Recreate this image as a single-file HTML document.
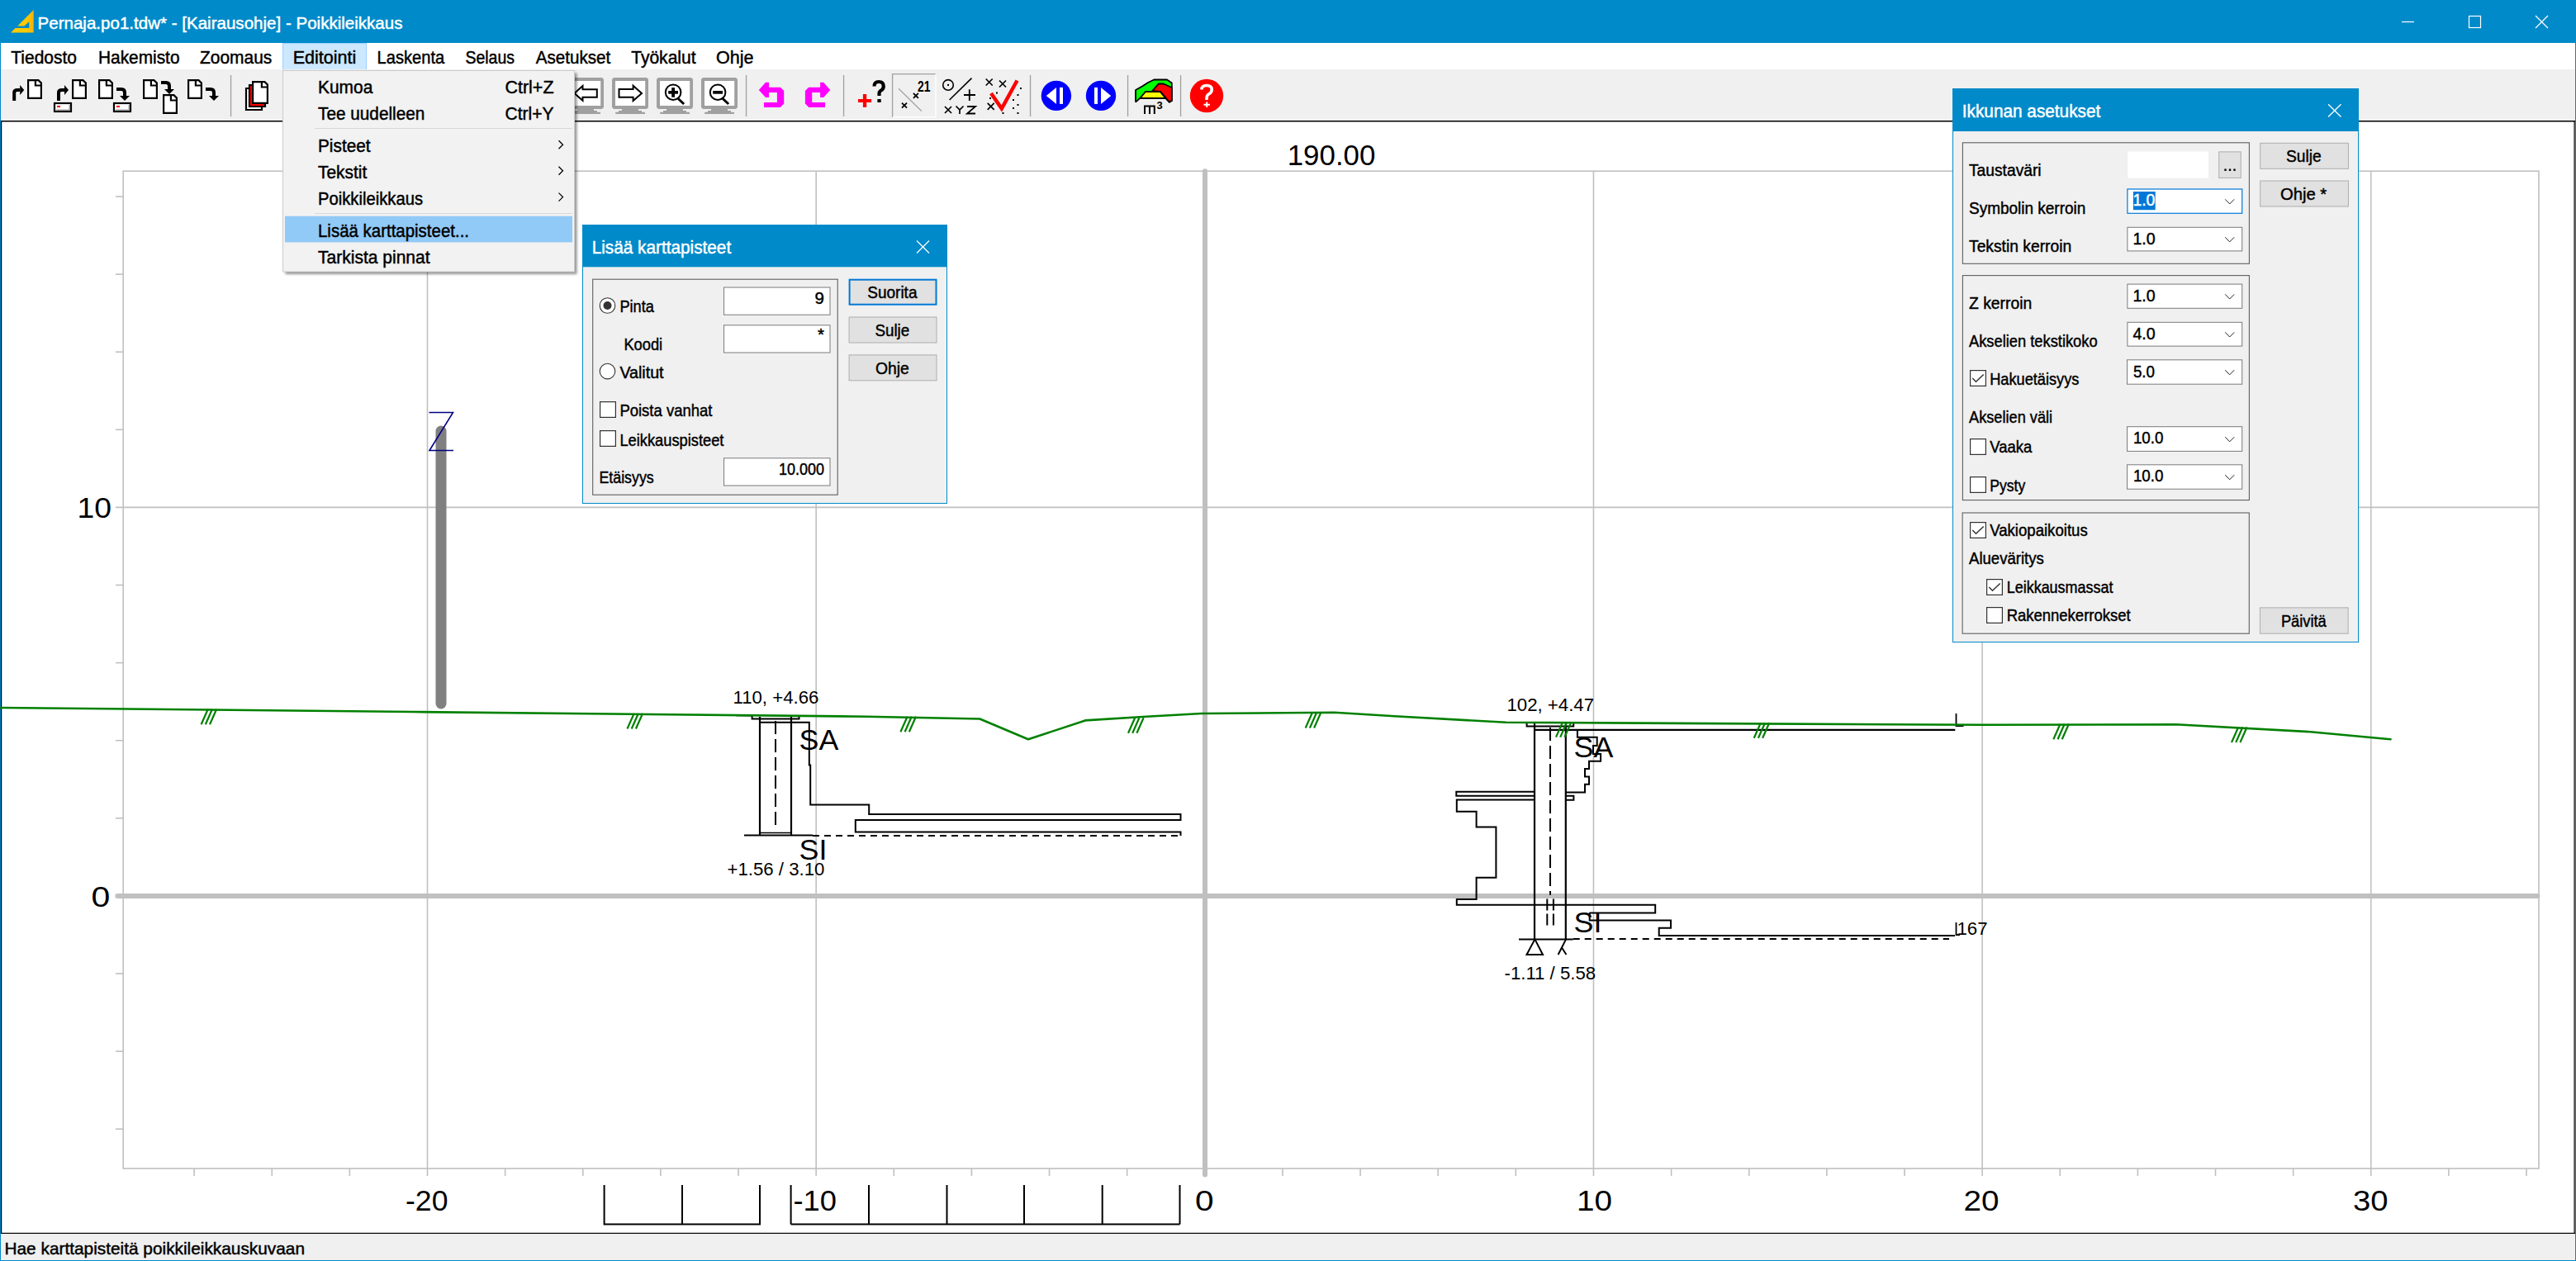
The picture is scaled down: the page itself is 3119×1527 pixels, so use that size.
<!DOCTYPE html>
<html><head><meta charset="utf-8"><style>
html,body{margin:0;padding:0;overflow:hidden;background:#fff;width:3119px;height:1527px}
svg{display:block;font-family:"Liberation Sans",sans-serif}
</style></head><body>
<svg width="3119" height="1527" viewBox="0 0 3119 1527">
<rect x="0" y="0" width="3119" height="1527" fill="#fff" />
<rect x="149.2" y="207.2" width="2924.8" height="1207.8" fill="none" stroke="#c0c0c0" stroke-width="1.6" />
<line x1="235.1099999999999" y1="1415" x2="235.1099999999999" y2="1424" stroke="#c0c0c0" stroke-width="1.6" />
<line x1="329.24" y1="1415" x2="329.24" y2="1424" stroke="#c0c0c0" stroke-width="1.6" />
<line x1="423.3700000000001" y1="1415" x2="423.3700000000001" y2="1424" stroke="#c0c0c0" stroke-width="1.6" />
<line x1="611.63" y1="1415" x2="611.63" y2="1424" stroke="#c0c0c0" stroke-width="1.6" />
<line x1="705.76" y1="1415" x2="705.76" y2="1424" stroke="#c0c0c0" stroke-width="1.6" />
<line x1="799.89" y1="1415" x2="799.89" y2="1424" stroke="#c0c0c0" stroke-width="1.6" />
<line x1="894.02" y1="1415" x2="894.02" y2="1424" stroke="#c0c0c0" stroke-width="1.6" />
<line x1="1082.28" y1="1415" x2="1082.28" y2="1424" stroke="#c0c0c0" stroke-width="1.6" />
<line x1="1176.4099999999999" y1="1415" x2="1176.4099999999999" y2="1424" stroke="#c0c0c0" stroke-width="1.6" />
<line x1="1270.54" y1="1415" x2="1270.54" y2="1424" stroke="#c0c0c0" stroke-width="1.6" />
<line x1="1364.67" y1="1415" x2="1364.67" y2="1424" stroke="#c0c0c0" stroke-width="1.6" />
<line x1="1552.9299999999998" y1="1415" x2="1552.9299999999998" y2="1424" stroke="#c0c0c0" stroke-width="1.6" />
<line x1="1647.06" y1="1415" x2="1647.06" y2="1424" stroke="#c0c0c0" stroke-width="1.6" />
<line x1="1741.19" y1="1415" x2="1741.19" y2="1424" stroke="#c0c0c0" stroke-width="1.6" />
<line x1="1835.32" y1="1415" x2="1835.32" y2="1424" stroke="#c0c0c0" stroke-width="1.6" />
<line x1="2023.58" y1="1415" x2="2023.58" y2="1424" stroke="#c0c0c0" stroke-width="1.6" />
<line x1="2117.71" y1="1415" x2="2117.71" y2="1424" stroke="#c0c0c0" stroke-width="1.6" />
<line x1="2211.84" y1="1415" x2="2211.84" y2="1424" stroke="#c0c0c0" stroke-width="1.6" />
<line x1="2305.97" y1="1415" x2="2305.97" y2="1424" stroke="#c0c0c0" stroke-width="1.6" />
<line x1="2494.2299999999996" y1="1415" x2="2494.2299999999996" y2="1424" stroke="#c0c0c0" stroke-width="1.6" />
<line x1="2588.3599999999997" y1="1415" x2="2588.3599999999997" y2="1424" stroke="#c0c0c0" stroke-width="1.6" />
<line x1="2682.49" y1="1415" x2="2682.49" y2="1424" stroke="#c0c0c0" stroke-width="1.6" />
<line x1="2776.62" y1="1415" x2="2776.62" y2="1424" stroke="#c0c0c0" stroke-width="1.6" />
<line x1="2964.88" y1="1415" x2="2964.88" y2="1424" stroke="#c0c0c0" stroke-width="1.6" />
<line x1="3059.01" y1="1415" x2="3059.01" y2="1424" stroke="#c0c0c0" stroke-width="1.6" />
<line x1="140" y1="1367.2" x2="149" y2="1367.2" stroke="#c0c0c0" stroke-width="1.6" />
<line x1="140" y1="1273.1000000000001" x2="149" y2="1273.1000000000001" stroke="#c0c0c0" stroke-width="1.6" />
<line x1="140" y1="1179.0" x2="149" y2="1179.0" stroke="#c0c0c0" stroke-width="1.6" />
<line x1="140" y1="990.8000000000001" x2="149" y2="990.8000000000001" stroke="#c0c0c0" stroke-width="1.6" />
<line x1="140" y1="896.7" x2="149" y2="896.7" stroke="#c0c0c0" stroke-width="1.6" />
<line x1="140" y1="802.6000000000001" x2="149" y2="802.6000000000001" stroke="#c0c0c0" stroke-width="1.6" />
<line x1="140" y1="708.5000000000001" x2="149" y2="708.5000000000001" stroke="#c0c0c0" stroke-width="1.6" />
<line x1="140" y1="520.3000000000002" x2="149" y2="520.3000000000002" stroke="#c0c0c0" stroke-width="1.6" />
<line x1="140" y1="426.20000000000016" x2="149" y2="426.20000000000016" stroke="#c0c0c0" stroke-width="1.6" />
<line x1="140" y1="332.10000000000014" x2="149" y2="332.10000000000014" stroke="#c0c0c0" stroke-width="1.6" />
<line x1="140" y1="238.0000000000001" x2="149" y2="238.0000000000001" stroke="#c0c0c0" stroke-width="1.6" />
<line x1="517.5" y1="207" x2="517.5" y2="1424" stroke="#c0c0c0" stroke-width="1.6" />
<line x1="988.15" y1="207" x2="988.15" y2="1424" stroke="#c0c0c0" stroke-width="1.6" />
<line x1="1929.4499999999998" y1="207" x2="1929.4499999999998" y2="1424" stroke="#c0c0c0" stroke-width="1.6" />
<line x1="2400.1" y1="207" x2="2400.1" y2="1424" stroke="#c0c0c0" stroke-width="1.6" />
<line x1="2870.75" y1="207" x2="2870.75" y2="1424" stroke="#c0c0c0" stroke-width="1.6" />
<line x1="140" y1="614.4000000000001" x2="3074" y2="614.4000000000001" stroke="#c0c0c0" stroke-width="1.6" />
<line x1="1459" y1="207.3" x2="1459" y2="1422.5" stroke="#c0c0c0" stroke-width="6" stroke-linecap="round"/>
<line x1="142.3" y1="1085" x2="3072.5" y2="1085" stroke="#c0c0c0" stroke-width="6" stroke-linecap="round"/>
<text x="93.5" y="627" font-size="35.7" textLength="41.5" lengthAdjust="spacingAndGlyphs">10</text>
<text x="110.5" y="1098" font-size="35.7" textLength="22.8" lengthAdjust="spacingAndGlyphs">0</text>
<text x="491" y="1466" font-size="35.7" textLength="51.5" lengthAdjust="spacingAndGlyphs">-20</text>
<text x="960.5" y="1466" font-size="35.7" textLength="52.5" lengthAdjust="spacingAndGlyphs">-10</text>
<text x="1447" y="1466" font-size="35.7" textLength="22.6" lengthAdjust="spacingAndGlyphs">0</text>
<text x="1909" y="1466" font-size="35.7" textLength="43" lengthAdjust="spacingAndGlyphs">10</text>
<text x="2377.5" y="1466" font-size="35.7" textLength="43" lengthAdjust="spacingAndGlyphs">20</text>
<text x="2849" y="1466" font-size="35.7" textLength="42.5" lengthAdjust="spacingAndGlyphs">30</text>
<text x="1558.7" y="200.3" font-size="35.7" textLength="106.7" lengthAdjust="spacingAndGlyphs">190.00</text>
<path d="M731.6,1435 V1482.5 H920 V1435 M826,1435 V1482.5" stroke="#000" stroke-width="2" fill="none" />
<path d="M957.6,1482.5 H1428.5 M957.6,1435 V1482.5 M1052,1435 V1482.5 M1146.5,1435 V1482.5 M1240,1435 V1482.5 M1334.7,1435 V1482.5 M1428.5,1435 V1482.5" stroke="#000" stroke-width="2" fill="none" />
<rect x="0" y="0" width="3119" height="52" fill="#008ac9" />
<defs><linearGradient id="yg" x1="0" y1="0" x2="1" y2="0"><stop offset="0" stop-color="#ffcc00"/><stop offset="0.7" stop-color="#ffc800"/><stop offset="1" stop-color="#f7b10a"/></linearGradient></defs>
<path d="M13.1,39.6 L18.5,34 H35.3 V26.3 L29.3,31.5 H21.3 L40.7,12 V39.6 Z" fill="url(#yg)"/>
<text x="45.5" y="34.9" font-size="20.3" fill="#fff" textLength="442" lengthAdjust="spacingAndGlyphs" stroke="#fff" stroke-width="0.45">Pernaja.po1.tdw* - [Kairausohje] - Poikkileikkaus</text>
<line x1="2908" y1="26.5" x2="2923" y2="26.5" stroke="#fff" stroke-width="1.2" />
<rect x="2989.5" y="19.5" width="14" height="14" fill="none" stroke="#fff" stroke-width="1.2" />
<line x1="3070" y1="19" x2="3085" y2="34" stroke="#fff" stroke-width="1.2" />
<line x1="3085" y1="19" x2="3070" y2="34" stroke="#fff" stroke-width="1.2" />
<rect x="1" y="52" width="3117" height="32" fill="#fff" />
<rect x="342.5" y="52.5" width="101" height="32" fill="#cce8ff" stroke="#99d1ff" stroke-width="1" />
<text x="13.3" y="77.2" font-size="21.2" textLength="79.7" lengthAdjust="spacingAndGlyphs" stroke="#000" stroke-width="0.45">Tiedosto</text>
<text x="119" y="77.2" font-size="21.2" textLength="98.5" lengthAdjust="spacingAndGlyphs" stroke="#000" stroke-width="0.45">Hakemisto</text>
<text x="242" y="77.2" font-size="21.2" textLength="87.3" lengthAdjust="spacingAndGlyphs" stroke="#000" stroke-width="0.45">Zoomaus</text>
<text x="354.7" y="77.2" font-size="21.2" textLength="76.7" lengthAdjust="spacingAndGlyphs" stroke="#000" stroke-width="0.45">Editointi</text>
<text x="456.6" y="77.2" font-size="21.2" textLength="81.6" lengthAdjust="spacingAndGlyphs" stroke="#000" stroke-width="0.45">Laskenta</text>
<text x="563.4" y="77.2" font-size="21.2" textLength="59.6" lengthAdjust="spacingAndGlyphs" stroke="#000" stroke-width="0.45">Selaus</text>
<text x="648.7" y="77.2" font-size="21.2" textLength="90.6" lengthAdjust="spacingAndGlyphs" stroke="#000" stroke-width="0.45">Asetukset</text>
<text x="764.2" y="77.2" font-size="21.2" textLength="78.4" lengthAdjust="spacingAndGlyphs" stroke="#000" stroke-width="0.45">Työkalut</text>
<text x="867" y="77.2" font-size="21.2" textLength="45.4" lengthAdjust="spacingAndGlyphs" stroke="#000" stroke-width="0.45">Ohje</text>
<rect x="1" y="84" width="3117" height="62" fill="#f0f0f0" />
<rect x="0" y="146" width="3119" height="1.5" fill="#000" />
<rect x="1" y="146" width="1.2" height="1348" fill="#000" />
<rect x="3116.5" y="146" width="1.2" height="1348" fill="#000" />
<rect x="0" y="1492.8" width="3119" height="1.4" fill="#000" />
<rect x="1" y="1494.2" width="3117" height="32" fill="#f0f0f0" />
<text x="5.5" y="1518.8" font-size="21" textLength="363.5" lengthAdjust="spacingAndGlyphs" stroke="#000" stroke-width="0.45">Hae karttapisteitä poikkileikkauskuvaan</text>
<rect x="0" y="0" width="1" height="1527" fill="#008ac9" />
<rect x="3118" y="0" width="1" height="1527" fill="#008ac9" />
<rect x="0" y="1526" width="3119" height="1" fill="#008ac9" />
<line x1="534" y1="522" x2="534" y2="852" stroke="#808080" stroke-width="13" stroke-linecap="round"/>
<polyline points="519.5,499.5 548.5,499.5 520,545.5 549,545.5" fill="none" stroke="#000080" stroke-width="1.6" />
<line x1="891" y1="866.2" x2="910" y2="866.6" stroke="#000" stroke-width="2" />
<path d="M910.6,866.5 V870.6 H967.5 V866.8" stroke="#000" stroke-width="2" fill="none" />
<path d="M920,874.7 H979.8 V926.6 H981.2 V974.6 H1052.2 V986 H1429.5 V993.1 H1035.8 V1007.4 H1429.5 V1012.1" stroke="#000" stroke-width="2" fill="none" />
<line x1="920" y1="868" x2="920" y2="1011.5" stroke="#000" stroke-width="2.2" />
<line x1="958" y1="868" x2="958" y2="1011.5" stroke="#000" stroke-width="2.2" />
<path d="M920,1008.5 H958" stroke="#000" stroke-width="1.5" fill="none" />
<line x1="939" y1="873" x2="939" y2="1000.5" stroke="#000" stroke-width="2" stroke-dasharray="16,6"/>
<line x1="901" y1="1011.5" x2="984" y2="1011.5" stroke="#000" stroke-width="2" />
<line x1="984" y1="1012" x2="1429" y2="1012" stroke="#000" stroke-width="2" stroke-dasharray="8,6"/>
<text x="887.5" y="852" font-size="22.2">110, +4.66</text>
<text x="967.5" y="907.8" font-size="35.8">SA</text>
<text x="967.5" y="1040.6" font-size="35.8">SI</text>
<text x="880.5" y="1060.3" font-size="22.2">+1.56 / 3.10</text>
<path d="M1848.6,875 V879.4 H1905.2 V875" stroke="#000" stroke-width="2" fill="none" />
<line x1="1858" y1="875" x2="1858" y2="1137.4" stroke="#000" stroke-width="2.2" />
<line x1="1895.8" y1="875" x2="1895.8" y2="1137.4" stroke="#000" stroke-width="2.2" />
<line x1="1877" y1="881" x2="1877" y2="1083.7" stroke="#000" stroke-width="2" stroke-dasharray="16,6"/>
<line x1="1873.3" y1="1088.5" x2="1873.3" y2="1122.8" stroke="#000" stroke-width="2" stroke-dasharray="14,4"/>
<line x1="1880.9" y1="1088.5" x2="1880.9" y2="1122.8" stroke="#000" stroke-width="2" stroke-dasharray="14,4"/>
<line x1="1858" y1="883.9" x2="2367.3" y2="883.9" stroke="#000" stroke-width="2.2" />
<path d="M1909.9,884 V892.7 H1933.7 V903 H1929 V912.9 H1938.1 V921.7 H1924 V931 H1919 V940.5 H1924 V949.7 H1919 V959.4 H1895.8" stroke="#000" stroke-width="2" fill="none" />
<path d="M1858,958.8 H1763.3 V963.8 H1858" stroke="#000" stroke-width="2" fill="none" />
<path d="M1858,968.6 H1763.8 V982.8 H1787.6 V1001.5 H1811.4 V1062.8 H1787.6 V1088.9 H1763.8 V1095.7 H2004.2 V1105.6 H1924.7" stroke="#000" stroke-width="2" fill="none" />
<path d="M1895.8,963.8 H1905.4 V968.8 H1895.8" stroke="#000" stroke-width="2" fill="none" />
<path d="M1924.7,1105 V1114.5 H2023 V1123.7 H2008.7 V1133 H2367" stroke="#000" stroke-width="2" fill="none" />
<line x1="1839" y1="1137.4" x2="1904.7" y2="1137.4" stroke="#000" stroke-width="2" />
<line x1="1904.7" y1="1137" x2="2360" y2="1137" stroke="#000" stroke-width="2" stroke-dasharray="8,6"/>
<path d="M1858.4,1137.4 L1848.5,1156 H1868 Z" stroke="#000" stroke-width="2" fill="none" />
<path d="M1896.1,1137.4 L1886.6,1156 M1891.3,1148 L1896.5,1156" stroke="#000" stroke-width="2" fill="none" />
<text x="1824.5" y="861.3" font-size="22.2">102, +4.47</text>
<text x="1905.5" y="916.8" font-size="35.8">SA</text>
<text x="1905.5" y="1128.5" font-size="35.8">SI</text>
<text x="1821.5" y="1185.6" font-size="22.2">-1.11 / 5.58</text>
<path d="M2368.5,864 V879 H2377.5" stroke="#000" stroke-width="1.8" fill="none" />
<path d="M2368.5,1117 V1132 H2373" stroke="#000" stroke-width="1.8" fill="none" />
<text x="2369.5" y="1131.8" font-size="22.2">167</text>
<polyline points="1,857 500,862 1049,867.7 1186.3,870.5 1245,895.3 1314,872.4 1383.8,868 1455,864 1615.6,862.7 1688.3,867.3 1823.5,874.8 2400,877.8 2634.4,877.2 2797.7,886.2 2894.5,895.2" fill="none" stroke="#008000" stroke-width="2.6" stroke-linejoin="round" stroke-linecap="round"/>
<path d="M243.6,877.3 L251.8,858.8 M248.8,877.3 L257.0,858.8 M254.0,877.3 L262.2,858.8 " stroke="#008000" stroke-width="2.2" fill="none" />
<path d="M759.5,882.5 L767.7,864.0 M764.7,882.5 L772.9,864.0 M769.9,882.5 L778.1,864.0 " stroke="#008000" stroke-width="2.2" fill="none" />
<path d="M1090.4,886.3 L1098.6,867.8 M1095.6,886.3 L1103.8,867.8 M1100.8,886.3 L1109.0,867.8 " stroke="#008000" stroke-width="2.2" fill="none" />
<path d="M1366.0,887.8 L1374.2,869.3 M1371.2,887.8 L1379.4,869.3 M1376.4,887.8 L1384.6,869.3 " stroke="#008000" stroke-width="2.2" fill="none" />
<path d="M1580.7,881.5 L1588.9,863.0 M1585.9,881.5 L1594.1,863.0 M1591.1,881.5 L1599.3,863.0 " stroke="#008000" stroke-width="2.2" fill="none" />
<path d="M1884.0,892.6 L1892.2,874.1 M1889.2,892.6 L1897.4,874.1 M1894.4,892.6 L1902.6,874.1 " stroke="#008000" stroke-width="2.2" fill="none" />
<path d="M2123.7,893.8 L2131.9,875.3 M2128.9,893.8 L2137.1,875.3 M2134.1,893.8 L2142.3,875.3 " stroke="#008000" stroke-width="2.2" fill="none" />
<path d="M2486.3,895.2 L2494.5,876.7 M2491.5,895.2 L2499.7,876.7 M2496.7,895.2 L2504.9,876.7 " stroke="#008000" stroke-width="2.2" fill="none" />
<path d="M2702.0,899 L2710.2,880.5 M2707.2,899 L2715.4,880.5 M2712.4,899 L2720.6,880.5 " stroke="#008000" stroke-width="2.2" fill="none" />
<path d="M17.2,122 V112 Q17.2,109 21.2,109 H24.2" fill="none" stroke="#000" stroke-width="4"/>
<path d="M24.2,103 L29.2,109 L24.2,115 Z" fill="#000"/>
<path d="M34.1,97.1 H46.5 L49.9,100.5 V118.9 H34.1 Z" fill="#fff" stroke="#000" stroke-width="2.2" stroke-linejoin="miter"/>
<path d="M42.9,97.1 V103.5 H49.9" fill="none" stroke="#000" stroke-width="2.2"/>
<path d="M71,122 V112 Q71,109 75,109 H78" fill="none" stroke="#000" stroke-width="4"/>
<path d="M78,103 L83,109 L78,115 Z" fill="#000"/>
<path d="M88.1,97.1 H100.5 L103.9,100.5 V118.9 H88.1 Z" fill="#fff" stroke="#000" stroke-width="2.2" stroke-linejoin="miter"/>
<path d="M96.9,97.1 V103.5 H103.9" fill="none" stroke="#000" stroke-width="2.2"/>
<rect x="66" y="125" width="20" height="10" fill="#fff" stroke="#000" stroke-width="2.2"/>
<rect x="68" y="132.5" width="17" height="1.6" fill="#a0a0a0"/>
<rect x="83.5" y="127" width="1.6" height="7" fill="#a0a0a0"/>
<rect x="69" y="128" width="4" height="2" fill="#f00"/>
<path d="M120.1,97.1 H132.5 L135.9,100.5 V118.9 H120.1 Z" fill="#fff" stroke="#000" stroke-width="2.2" stroke-linejoin="miter"/>
<path d="M128.9,97.1 V103.5 H135.9" fill="none" stroke="#000" stroke-width="2.2"/>
<path d="M141,108 H147 Q151,108 151,112 V116" fill="none" stroke="#000" stroke-width="4"/>
<path d="M145,116 H157 L151,122 Z" fill="#000"/>
<rect x="138" y="125" width="20" height="10" fill="#fff" stroke="#000" stroke-width="2.2"/>
<rect x="140" y="132.5" width="17" height="1.6" fill="#a0a0a0"/>
<rect x="155.5" y="127" width="1.6" height="7" fill="#a0a0a0"/>
<rect x="141" y="128" width="4" height="2" fill="#f00"/>
<path d="M174.1,97.1 H186.5 L189.9,100.5 V118.9 H174.1 Z" fill="#fff" stroke="#000" stroke-width="2.2" stroke-linejoin="miter"/>
<path d="M182.9,97.1 V103.5 H189.9" fill="none" stroke="#000" stroke-width="2.2"/>
<path d="M195,100 H201 Q205,100 205,104 V108" fill="none" stroke="#000" stroke-width="4"/>
<path d="M199,108 H211 L205,114 Z" fill="#000"/>
<path d="M198.1,115.1 H210.5 L213.9,118.5 V136.9 H198.1 Z" fill="#fff" stroke="#000" stroke-width="2.2" stroke-linejoin="miter"/>
<path d="M206.9,115.1 V121.5 H213.9" fill="none" stroke="#000" stroke-width="2.2"/>
<path d="M228.1,97.1 H240.5 L243.9,100.5 V118.9 H228.1 Z" fill="#fff" stroke="#000" stroke-width="2.2" stroke-linejoin="miter"/>
<path d="M236.9,97.1 V103.5 H243.9" fill="none" stroke="#000" stroke-width="2.2"/>
<path d="M249,108 H255 Q259,108 259,112 V116" fill="none" stroke="#000" stroke-width="4"/>
<path d="M253,116 H265 L259,122 Z" fill="#000"/>
<rect x="278.9" y="91" width="1.3" height="50" fill="#a0a0a0"/>
<rect x="902.9" y="91" width="1.3" height="50" fill="#a0a0a0"/>
<rect x="1020.9" y="91" width="1.3" height="50" fill="#a0a0a0"/>
<rect x="1246.9" y="91" width="1.3" height="50" fill="#a0a0a0"/>
<rect x="1364.9" y="91" width="1.3" height="50" fill="#a0a0a0"/>
<rect x="1428.9" y="91" width="1.3" height="50" fill="#a0a0a0"/>
<path d="M298,107 H317 V133 H298 Z" fill="#fff" stroke="#000" stroke-width="2.2"/>
<path d="M302,103 H321 V129 H302 Z" fill="#f00" stroke="#000" stroke-width="2.2"/>
<rect x="303.6" y="104.6" width="15.6" height="21.5" fill="#f00"/>
<path d="M306.1,99.1 H320.5 L323.9,102.5 V124.9 H306.1 Z" fill="#fff" stroke="#000" stroke-width="2.2" stroke-linejoin="miter"/>
<path d="M316.9,99.1 V105.5 H323.9" fill="none" stroke="#000" stroke-width="2.2"/>
<path d="M689,94 H729 L731,96 V130 L729,132 H689 L687,130 V96 Z" fill="#a0a0a0"/>
<rect x="691" y="98" width="36.2" height="30" fill="#fff"/>
<rect x="699" y="131.5" width="20" height="3" fill="#a0a0a0"/>
<rect x="695" y="134" width="28" height="2" fill="#a0a0a0"/>
<rect x="691.2" y="135.8" width="35.8" height="2.2" fill="#a0a0a0"/>
<path d="M743,94 H783 L785,96 V130 L783,132 H743 L741,130 V96 Z" fill="#a0a0a0"/>
<rect x="745" y="98" width="36.2" height="30" fill="#fff"/>
<rect x="753" y="131.5" width="20" height="3" fill="#a0a0a0"/>
<rect x="749" y="134" width="28" height="2" fill="#a0a0a0"/>
<rect x="745.2" y="135.8" width="35.8" height="2.2" fill="#a0a0a0"/>
<path d="M797,94 H837 L839,96 V130 L837,132 H797 L795,130 V96 Z" fill="#a0a0a0"/>
<rect x="799" y="98" width="36.2" height="30" fill="#fff"/>
<rect x="807" y="131.5" width="20" height="3" fill="#a0a0a0"/>
<rect x="803" y="134" width="28" height="2" fill="#a0a0a0"/>
<rect x="799.2" y="135.8" width="35.8" height="2.2" fill="#a0a0a0"/>
<path d="M851,94 H891 L893,96 V130 L891,132 H851 L849,130 V96 Z" fill="#a0a0a0"/>
<rect x="853" y="98" width="36.2" height="30" fill="#fff"/>
<rect x="861" y="131.5" width="20" height="3" fill="#a0a0a0"/>
<rect x="857" y="134" width="28" height="2" fill="#a0a0a0"/>
<rect x="853.2" y="135.8" width="35.8" height="2.2" fill="#a0a0a0"/>
<path d="M705.5,108.2 H722.8 V117.7 H705.5 V121.8 L695.5,112.9 L705.5,104 Z" fill="#fff" stroke="#000" stroke-width="2"/>
<path d="M749.5,108 H766.6 V103.8 L777,112.9 L766.6,122 V117.7 H749.5 Z" fill="#fff" stroke="#000" stroke-width="2"/>
<circle cx="815.1" cy="111.7" r="9.3" fill="#fff" stroke="#000" stroke-width="2"/>
<rect x="809.2" y="110" width="11.8" height="3.7" fill="#000"/>
<rect x="813.2" y="106.1" width="3.8" height="11.6" fill="#000"/>
<path d="M820.1,118.5 L828.1,126" stroke="#000" stroke-width="3"/>
<circle cx="869.1" cy="111.7" r="9.3" fill="#fff" stroke="#000" stroke-width="2"/>
<rect x="863.2" y="110" width="11.8" height="3.7" fill="#000"/>
<path d="M874.1,118.5 L882.1,126" stroke="#000" stroke-width="3"/>
<path d="M918.8,109 L927,99.8 H931 V105.8 H944.9 L949.2,110 V125.5 L944.9,129.9 H925 V124 H940.9 V112 H931 V118 H927 Z" fill="#ff00ff"/>
<path d="M1005.3,109 L997.1,99.8 H993.1 V105.8 H979.2 L974.9,110 V125.5 L979.2,129.9 H999 V124 H983.2 V112 H993.1 V118 H997.1 Z" fill="#ff00ff"/>
<rect x="1039" y="120" width="16.1" height="4" fill="#f00"/><rect x="1044.9" y="114" width="4.3" height="15.9" fill="#f00"/>
<path d="M1058.5,104.5 Q1058.5,99 1064,99 Q1069.8,99 1069.8,104.5 Q1069.8,108 1066,110 Q1064.5,111 1064.5,114 V116" fill="none" stroke="#000" stroke-width="4.2"/>
<rect x="1062.4" y="120" width="4.3" height="4" fill="#000"/>
<rect x="1080" y="89" width="53.3" height="53" fill="#f0f0f0"/>
<path d="M1080.6,142 V89.6 H1133.3" fill="none" stroke="#a0a0a0" stroke-width="1.3"/>
<path d="M1081,141.6 H1133 V89.6" fill="none" stroke="#fff" stroke-width="1.3"/>
<path d="M1088,107.2 L1115.8,134.5" stroke="#a0a0a0" stroke-width="1.2"/>
<path d="M1092,124.6 L1098,130.6 M1098,124.6 L1092,130.6" stroke="#000" stroke-width="1.8"/>
<path d="M1105.9,112.8 L1111.9,118.8 M1111.9,112.8 L1105.9,118.8" stroke="#000" stroke-width="1.8"/>
<text x="1111" y="110.9" font-size="18" font-weight="bold" textLength="15.5" lengthAdjust="spacingAndGlyphs">21</text>
<circle cx="1148" cy="102.9" r="6.3" fill="none" stroke="#000" stroke-width="1.6"/><rect x="1147" y="101.9" width="2" height="2" fill="#000"/>
<path d="M1149.6,121 L1176.5,94.6" stroke="#000" stroke-width="1.6"/>
<path d="M1167,115 H1181 M1173.8,108.3 V122" stroke="#000" stroke-width="1.8"/>
<path d="M1144,129 L1152,137 M1152,129 L1144,137" stroke="#000" stroke-width="1.7"/>
<path d="M1157.5,128.5 L1162,133 L1166.5,128.5 M1162,133 V138" fill="none" stroke="#000" stroke-width="1.7"/>
<path d="M1171,129 H1181 L1171,137.5 H1181" fill="none" stroke="#000" stroke-width="1.8"/>
<path d="M1193.7,95.5 L1201.7,103.5 M1201.7,95.5 L1193.7,103.5" stroke="#000" stroke-width="1.7"/>
<path d="M1210,97.5 L1218,105.5 M1218,97.5 L1210,105.5" stroke="#000" stroke-width="1.7"/>
<path d="M1195.7,124.80000000000001 L1203.7,132.8 M1203.7,124.80000000000001 L1195.7,132.8" stroke="#000" stroke-width="1.7"/>
<rect x="1235" y="106" width="2" height="2" fill="#000"/>
<rect x="1231.5" y="114" width="2" height="2" fill="#000"/>
<rect x="1226" y="120" width="2" height="2" fill="#000"/>
<rect x="1231.5" y="126" width="2" height="2" fill="#000"/>
<rect x="1226" y="130" width="2" height="2" fill="#000"/>
<rect x="1231.5" y="136" width="2" height="2" fill="#000"/>
<rect x="1213.5" y="136" width="2" height="2" fill="#000"/>
<rect x="1198" y="118" width="2" height="2" fill="#000"/>
<rect x="1206" y="111.5" width="2" height="2" fill="#000"/>
<path d="M1200,113 L1212.8,131.5 L1231.5,97.5" fill="none" stroke="#f00" stroke-width="4.5"/>
<circle cx="1278.9" cy="115.9" r="18.2" fill="#0000ff"/>
<path d="M1266.8,115.9 L1279,105.9 V125.9 Z" fill="#fff"/><rect x="1283" y="105.9" width="4" height="20" fill="#fff"/>
<circle cx="1333" cy="115.9" r="18.2" fill="#0000ff"/>
<path d="M1345.2,115.9 L1333,105.9 V125.9 Z" fill="#fff"/><rect x="1325" y="105.9" width="4" height="20" fill="#fff"/>
<path d="M1375,109 L1383,104.5 L1390,100 L1397.2,96.5 H1413 L1418.8,100.5 V122 L1415.8,123.6 L1411.2,118.9 H1380.4 L1375,123.6 Z" fill="#00ff00" stroke="#000" stroke-width="1.8" stroke-linejoin="bevel"/>
<path d="M1395.3,110 L1402.8,101.5 H1408.4 L1418.8,106 V122 L1415.8,123.6 L1405.1,111 Z" fill="#f00" stroke="#000" stroke-width="1.8"/>
<path d="M1387,111 H1404.7 L1411.2,118.9 H1380.4 Z" fill="#ffff00" stroke="#000" stroke-width="1.8"/>
<path d="M1386,138 V128.5 H1397.8 V138 M1392,128.5 V138" fill="none" stroke="#000" stroke-width="2"/>
<text x="1400.5" y="132" font-size="13" font-weight="bold">3</text>
<circle cx="1461" cy="116" r="20.2" fill="#f00"/>
<path d="M1455,108.5 Q1455,103.5 1461,103.5 Q1467.2,103.5 1467.2,108.5 Q1467.2,112 1463.5,114 Q1461,115.5 1461,119 V121" fill="none" stroke="#fff" stroke-width="3.6"/>
<path d="M1457.5,126.8 H1465 M1461.2,123.5 V130" stroke="#fff" stroke-width="2"/>
<defs><filter id="sh" x="-5%" y="-5%" width="115%" height="115%"><feGaussianBlur stdDeviation="1.6"/></filter></defs>
<rect x="345.5" y="88.5" width="353" height="243.5" fill="rgba(0,0,0,0.42)" filter="url(#sh)"/>
<rect x="342.5" y="85.5" width="353" height="243.5" fill="#f2f2f2" stroke="#cccccc" stroke-width="1" />
<rect x="345" y="261.7" width="348" height="31.7" fill="#91c9f7" />
<line x1="381" y1="155.5" x2="693" y2="155.5" stroke="#d7d7d7" stroke-width="1.2" />
<line x1="381" y1="258.5" x2="693" y2="258.5" stroke="#d7d7d7" stroke-width="1.2" />
<text x="385" y="112.8" font-size="21.2" textLength="66.3" lengthAdjust="spacingAndGlyphs" stroke="#000" stroke-width="0.45">Kumoa</text>
<text x="385" y="144.6" font-size="21.2" textLength="129.3" lengthAdjust="spacingAndGlyphs" stroke="#000" stroke-width="0.45">Tee uudelleen</text>
<text x="385" y="184.1" font-size="21.2" textLength="63.6" lengthAdjust="spacingAndGlyphs" stroke="#000" stroke-width="0.45">Pisteet</text>
<text x="385" y="215.8" font-size="21.2" textLength="59.2" lengthAdjust="spacingAndGlyphs" stroke="#000" stroke-width="0.45">Tekstit</text>
<text x="385" y="247.5" font-size="21.2" textLength="127" lengthAdjust="spacingAndGlyphs" stroke="#000" stroke-width="0.45">Poikkileikkaus</text>
<text x="385" y="286.8" font-size="21.2" textLength="183" lengthAdjust="spacingAndGlyphs" stroke="#000" stroke-width="0.45">Lisää karttapisteet...</text>
<text x="385" y="318.8" font-size="21.2" textLength="135.6" lengthAdjust="spacingAndGlyphs" stroke="#000" stroke-width="0.45">Tarkista pinnat</text>
<text x="611.5" y="112.8" font-size="21.2" textLength="59" lengthAdjust="spacingAndGlyphs" stroke="#000" stroke-width="0.45">Ctrl+Z</text>
<text x="611.5" y="144.6" font-size="21.2" textLength="59" lengthAdjust="spacingAndGlyphs" stroke="#000" stroke-width="0.45">Ctrl+Y</text>
<path d="M676.5,170.2 L681.5,175.2 L676.5,180.2" stroke="#000" stroke-width="1.3" fill="none" />
<path d="M676.5,201.8 L681.5,206.8 L676.5,211.8" stroke="#000" stroke-width="1.3" fill="none" />
<path d="M676.5,233.6 L681.5,238.6 L676.5,243.6" stroke="#000" stroke-width="1.3" fill="none" />
<rect x="705" y="272" width="442" height="338" fill="#f0f0f0" />
<rect x="705" y="272" width="442" height="51.3" fill="#008ac9" />
<rect x="705.5" y="272.5" width="441" height="337" fill="none" stroke="#008ac9" stroke-width="1" />
<text x="716.7" y="307.2" font-size="21.6" fill="#fff" textLength="168.5" lengthAdjust="spacingAndGlyphs" stroke="#fff" stroke-width="0.45">Lisää karttapisteet</text>
<line x1="1110" y1="291.5" x2="1125" y2="306.5" stroke="#fff" stroke-width="1.3" />
<line x1="1125" y1="291.5" x2="1110" y2="306.5" stroke="#fff" stroke-width="1.3" />
<rect x="717.7" y="338.2" width="296.5" height="261" fill="none" stroke="#5f5f5f" stroke-width="1.1" />
<rect x="876.5" y="348.0" width="128.5" height="33.19999999999999" fill="#fff" stroke="#7a7a7a" stroke-width="1" />
<rect x="876.5" y="393.8" width="128.5" height="33.19999999999999" fill="#fff" stroke="#7a7a7a" stroke-width="1" />
<rect x="876.5" y="554.8" width="128.5" height="33.200000000000045" fill="#fff" stroke="#7a7a7a" stroke-width="1" />
<text x="998" y="368.3" font-size="20.5" text-anchor="end" stroke="#000" stroke-width="0.45">9</text>
<text x="998" y="411.5" font-size="20.5" text-anchor="end" stroke="#000" stroke-width="0.45">*</text>
<text x="998" y="575.4" font-size="20.5" textLength="55" lengthAdjust="spacingAndGlyphs" text-anchor="end" stroke="#000" stroke-width="0.45">10.000</text>
<circle cx="735.5" cy="370" r="9.3" fill="#fff" stroke="#333" stroke-width="1.1"/>
<circle cx="735.5" cy="370" r="5" fill="#333"/>
<circle cx="735.5" cy="449.6" r="9.3" fill="#fff" stroke="#333" stroke-width="1.1"/>
<text x="750.4" y="378.3" font-size="20.5" textLength="41.5" lengthAdjust="spacingAndGlyphs" stroke="#000" stroke-width="0.45">Pinta</text>
<text x="755.4" y="424" font-size="20.5" textLength="46.8" lengthAdjust="spacingAndGlyphs" stroke="#000" stroke-width="0.45">Koodi</text>
<text x="750.4" y="457.6" font-size="20.5" textLength="53.2" lengthAdjust="spacingAndGlyphs" stroke="#000" stroke-width="0.45">Valitut</text>
<rect x="726.6" y="486.6" width="18.8" height="18.8" fill="#fff" stroke="#333" stroke-width="1.2" />
<rect x="726.6" y="521.6" width="18.8" height="18.8" fill="#fff" stroke="#333" stroke-width="1.2" />
<text x="750.4" y="503.8" font-size="20.5" textLength="112" lengthAdjust="spacingAndGlyphs" stroke="#000" stroke-width="0.45">Poista vanhat</text>
<text x="750.4" y="539.8" font-size="20.5" textLength="126" lengthAdjust="spacingAndGlyphs" stroke="#000" stroke-width="0.45">Leikkauspisteet</text>
<text x="725.4" y="584.8" font-size="20.5" textLength="66.4" lengthAdjust="spacingAndGlyphs" stroke="#000" stroke-width="0.45">Etäisyys</text>
<rect x="1028.6" y="338.7" width="104.90000000000009" height="30.0" fill="#e1e1e1" stroke="#0078d7" stroke-width="2" />
<text x="1050.2" y="360.8" font-size="20.5" textLength="60.3" lengthAdjust="spacingAndGlyphs" stroke="#000" stroke-width="0.45">Suorita</text>
<rect x="1028.1" y="384.0" width="105.90000000000009" height="31.0" fill="#e1e1e1" stroke="#adadad" stroke-width="1" />
<text x="1059.4" y="407.1" font-size="20.5" textLength="41.9" lengthAdjust="spacingAndGlyphs" stroke="#000" stroke-width="0.45">Sulje</text>
<rect x="1028.1" y="429.9" width="105.90000000000009" height="30.900000000000034" fill="#e1e1e1" stroke="#adadad" stroke-width="1" />
<text x="1060" y="453" font-size="20.5" textLength="40.8" lengthAdjust="spacingAndGlyphs" stroke="#000" stroke-width="0.45">Ohje</text>
<rect x="2364" y="107" width="492" height="670.5" fill="#f0f0f0" />
<rect x="2364" y="107" width="492" height="52" fill="#008ac9" />
<rect x="2364.5" y="107.5" width="491" height="670" fill="none" stroke="#008ac9" stroke-width="1" />
<text x="2375.8" y="142.3" font-size="21.3" fill="#fff" textLength="167.5" lengthAdjust="spacingAndGlyphs" stroke="#fff" stroke-width="0.45">Ikkunan asetukset</text>
<line x1="2819" y1="126.3" x2="2834.5" y2="141.5" stroke="#fff" stroke-width="1.3" />
<line x1="2834.5" y1="126.3" x2="2819" y2="141.5" stroke="#fff" stroke-width="1.3" />
<rect x="2376.4" y="172.8" width="347" height="146.5" fill="none" stroke="#5f5f5f" stroke-width="1.1" />
<rect x="2376.4" y="333.6" width="347" height="272" fill="none" stroke="#5f5f5f" stroke-width="1.1" />
<rect x="2376.1" y="621" width="347.2" height="146.2" fill="none" stroke="#5f5f5f" stroke-width="1.1" />
<text x="2384" y="212.8" font-size="20.5" textLength="87.6" lengthAdjust="spacingAndGlyphs" stroke="#000" stroke-width="0.45">Taustaväri</text>
<rect x="2576.3" y="183.4" width="97.7" height="32.2" fill="#fff" />
<rect x="2686.7" y="183.9" width="26.5" height="31.5" fill="#e1e1e1" stroke="#adadad" stroke-width="1" />
<rect x="2693.3" y="204.5" width="2.4" height="2.4" fill="#000" />
<rect x="2698.8" y="204.5" width="2.4" height="2.4" fill="#000" />
<rect x="2704.3" y="204.5" width="2.4" height="2.4" fill="#000" />
<text x="2384" y="258.5" font-size="20.5" textLength="141.3" lengthAdjust="spacingAndGlyphs" stroke="#000" stroke-width="0.45">Symbolin kerroin</text>
<rect x="2575.9" y="229.0" width="138.79999999999973" height="29.30000000000001" fill="#fff" stroke="#0078d7" stroke-width="1.2" />
<path d="M2694.2,241.35 L2699.7,246.95000000000002 L2705.2,241.35" stroke="#222" stroke-width="1.0" fill="none" />
<text x="-1" y="0" font-size="20.5" textLength="2" lengthAdjust="spacingAndGlyphs" stroke="#000" stroke-width="0.45"></text>
<rect x="2582.9" y="232" width="26.8" height="22.2" fill="#0078d7" />
<text x="2582.4" y="249.3" font-size="20.5" fill="#fff" textLength="27" lengthAdjust="spacingAndGlyphs" stroke="#fff" stroke-width="0.45">1.0</text>
<text x="2384" y="304.7" font-size="20.5" textLength="124.2" lengthAdjust="spacingAndGlyphs" stroke="#000" stroke-width="0.45">Tekstin kerroin</text>
<rect x="2575.9" y="275.3" width="138.79999999999973" height="28.599999999999966" fill="#fff" stroke="#7a7a7a" stroke-width="1" />
<path d="M2694.2,287.3 L2699.7,292.90000000000003 L2705.2,287.3" stroke="#222" stroke-width="1.0" fill="none" />
<text x="2582.4" y="295.6" font-size="20.5" textLength="27.2" lengthAdjust="spacingAndGlyphs" stroke="#000" stroke-width="0.45">1.0</text>
<text x="2384" y="374.1" font-size="20.5" textLength="76.2" lengthAdjust="spacingAndGlyphs" stroke="#000" stroke-width="0.45">Z kerroin</text>
<rect x="2575.9" y="344.1" width="138.79999999999973" height="29.19999999999999" fill="#fff" stroke="#7a7a7a" stroke-width="1" />
<path d="M2694.2,356.40000000000003 L2699.7,362.00000000000006 L2705.2,356.40000000000003" stroke="#222" stroke-width="1.0" fill="none" />
<text x="2582.4" y="365" font-size="20.5" textLength="27.2" lengthAdjust="spacingAndGlyphs" stroke="#000" stroke-width="0.45">1.0</text>
<text x="2384" y="419.8" font-size="20.5" textLength="155.6" lengthAdjust="spacingAndGlyphs" stroke="#000" stroke-width="0.45">Akselien tekstikoko</text>
<rect x="2575.9" y="390.3" width="138.79999999999973" height="28.80000000000001" fill="#fff" stroke="#7a7a7a" stroke-width="1" />
<path d="M2694.2,402.40000000000003 L2699.7,408.00000000000006 L2705.2,402.40000000000003" stroke="#222" stroke-width="1.0" fill="none" />
<text x="2582.4" y="410.7" font-size="20.5" textLength="27.2" lengthAdjust="spacingAndGlyphs" stroke="#000" stroke-width="0.45">4.0</text>
<rect x="2385.6" y="448.6" width="18.8" height="18.8" fill="#fff" stroke="#333" stroke-width="1.2" />
<path d="M2388.3,458 L2392.5,462.2 L2401.7,453.5" stroke="#333" stroke-width="1.5" fill="none" />
<text x="2409.2" y="465.5" font-size="20.5" textLength="108.2" lengthAdjust="spacingAndGlyphs" stroke="#000" stroke-width="0.45">Hakuetäisyys</text>
<rect x="2575.5" y="435.8" width="139.19999999999982" height="29.399999999999977" fill="#fff" stroke="#7a7a7a" stroke-width="1" />
<path d="M2694.2,448.2 L2699.7,453.8 L2705.2,448.2" stroke="#222" stroke-width="1.0" fill="none" />
<text x="2582.9" y="456.7" font-size="20.5" textLength="26.1" lengthAdjust="spacingAndGlyphs" stroke="#000" stroke-width="0.45">5.0</text>
<text x="2384" y="511.5" font-size="20.5" textLength="101.1" lengthAdjust="spacingAndGlyphs" stroke="#000" stroke-width="0.45">Akselien väli</text>
<rect x="2385.6" y="531.6" width="18.8" height="18.8" fill="#fff" stroke="#333" stroke-width="1.2" />
<text x="2409.2" y="548.2" font-size="20.5" textLength="51" lengthAdjust="spacingAndGlyphs" stroke="#000" stroke-width="0.45">Vaaka</text>
<rect x="2575.5" y="516.7" width="139.19999999999982" height="29.699999999999932" fill="#fff" stroke="#7a7a7a" stroke-width="1" />
<path d="M2694.2,529.25 L2699.7,534.8499999999999 L2705.2,529.25" stroke="#222" stroke-width="1.0" fill="none" />
<text x="2582.9" y="537.4" font-size="20.5" textLength="36.6" lengthAdjust="spacingAndGlyphs" stroke="#000" stroke-width="0.45">10.0</text>
<rect x="2385.6" y="577.6" width="18.8" height="18.8" fill="#fff" stroke="#333" stroke-width="1.2" />
<text x="2409.2" y="594.6" font-size="20.5" textLength="43" lengthAdjust="spacingAndGlyphs" stroke="#000" stroke-width="0.45">Pysty</text>
<rect x="2575.5" y="562.8" width="139.19999999999982" height="29.40000000000009" fill="#fff" stroke="#7a7a7a" stroke-width="1" />
<path d="M2694.2,575.2 L2699.7,580.8 L2705.2,575.2" stroke="#222" stroke-width="1.0" fill="none" />
<text x="2582.9" y="583.4" font-size="20.5" textLength="36.6" lengthAdjust="spacingAndGlyphs" stroke="#000" stroke-width="0.45">10.0</text>
<rect x="2385.6" y="632.6" width="18.8" height="18.8" fill="#fff" stroke="#333" stroke-width="1.2" />
<path d="M2388.3,642 L2392.5,646.2 L2401.7,637.5" stroke="#333" stroke-width="1.5" fill="none" />
<text x="2409.2" y="648.9" font-size="20.5" textLength="118.5" lengthAdjust="spacingAndGlyphs" stroke="#000" stroke-width="0.45">Vakiopaikoitus</text>
<text x="2384" y="683.2" font-size="20.5" textLength="90.8" lengthAdjust="spacingAndGlyphs" stroke="#000" stroke-width="0.45">Alueväritys</text>
<rect x="2405.6" y="701.6" width="18.8" height="18.8" fill="#fff" stroke="#333" stroke-width="1.2" />
<path d="M2408.3,711 L2412.5,715.2 L2421.7,706.5" stroke="#333" stroke-width="1.5" fill="none" />
<text x="2429.7" y="717.8" font-size="20.5" textLength="128.8" lengthAdjust="spacingAndGlyphs" stroke="#000" stroke-width="0.45">Leikkausmassat</text>
<rect x="2405.6" y="735.6" width="18.8" height="18.8" fill="#fff" stroke="#333" stroke-width="1.2" />
<text x="2429.7" y="751.6" font-size="20.5" textLength="149.9" lengthAdjust="spacingAndGlyphs" stroke="#000" stroke-width="0.45">Rakennekerrokset</text>
<rect x="2736.7" y="173.3" width="106.70000000000027" height="31.0" fill="#e1e1e1" stroke="#adadad" stroke-width="1" />
<text x="2768" y="195.7" font-size="20.5" textLength="42.6" lengthAdjust="spacingAndGlyphs" stroke="#000" stroke-width="0.45">Sulje</text>
<rect x="2736.7" y="219.0" width="106.70000000000027" height="31.0" fill="#e1e1e1" stroke="#adadad" stroke-width="1" />
<text x="2760.9" y="241.9" font-size="20.5" textLength="56.3" lengthAdjust="spacingAndGlyphs" stroke="#000" stroke-width="0.45">Ohje *</text>
<rect x="2736.4" y="735.9" width="106.69999999999982" height="31.300000000000068" fill="#e1e1e1" stroke="#adadad" stroke-width="1" />
<text x="2761.9" y="758.9" font-size="20.5" textLength="54.8" lengthAdjust="spacingAndGlyphs" stroke="#000" stroke-width="0.45">Päivitä</text>
</svg></body></html>
